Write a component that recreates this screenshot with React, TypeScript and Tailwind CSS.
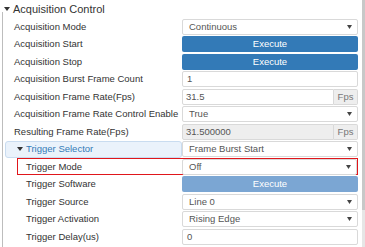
import React from "react";

type Row =
  | { label: string; kind: "select"; value: string; indent?: boolean; focus?: boolean }
  | { label: string; kind: "button"; disabled?: boolean; indent?: boolean }
  | { label: string; kind: "input"; value: string; indent?: boolean }
  | { label: string; kind: "unit"; value: string; readOnly?: boolean; indent?: boolean };

const acquisition: Row[] = [
  { label: "Acquisition Mode", kind: "select", value: "Continuous" },
  { label: "Acquisition Start", kind: "button" },
  { label: "Acquisition Stop", kind: "button" },
  { label: "Acquisition Burst Frame Count", kind: "input", value: "1" },
  { label: "Acquisition Frame Rate(Fps)", kind: "unit", value: "31.5" },
  { label: "Acquisition Frame Rate Control Enable", kind: "select", value: "True" },
  { label: "Resulting Frame Rate(Fps)", kind: "unit", value: "31.500000", readOnly: true },
];

const trigger: Row[] = [
  { label: "Trigger Mode", kind: "select", value: "Off", indent: true, focus: true },
  { label: "Trigger Software", kind: "button", disabled: true, indent: true },
  { label: "Trigger Source", kind: "select", value: "Line 0", indent: true },
  { label: "Trigger Activation", kind: "select", value: "Rising Edge", indent: true },
  { label: "Trigger Delay(us)", kind: "input", value: "0", indent: true },
];

function Caret({ className = "" }: { className?: string }) {
  return (
    <svg width="6" height="4" viewBox="0 0 6 4" className={className}>
      <path d="M0 0h6L3 4z" fill="currentColor" />
    </svg>
  );
}

function Control({ row }: { row: Row }) {
  if (row.kind === "button") {
    return (
      <div
        className={
          "h-[16px] rounded-[2px] flex items-center justify-center text-white text-[9.5px] " +
          (row.disabled ? "bg-[#7ba6d3]" : "bg-[#337ab7]")
        }
      >
        Execute
      </div>
    );
  }
  if (row.kind === "select") {
    return (
      <div className="h-[16px] bg-white border border-[#d9d9d9] rounded-[2px] flex items-center justify-between pl-[6px] pr-[5px] text-[9.5px] text-[#555]">
        <span>{row.value}</span>
        <svg width="5" height="4" viewBox="0 0 5 4" className="text-[#444]">
          <path d="M0 0h5L2.5 4z" fill="currentColor" />
        </svg>
      </div>
    );
  }
  if (row.kind === "input") {
    return (
      <div className="h-[16px] bg-white border border-[#d9d9d9] rounded-[2px] flex items-center pl-[4px] text-[9.5px] text-[#555]">
        {row.value}
      </div>
    );
  }
  return (
    <div className="h-[16px] flex text-[9.5px] text-[#555]">
      <div
        className={
          "flex-1 border border-[#d9d9d9] rounded-l-[2px] flex items-center pl-[3px] " +
          (row.readOnly ? "bg-[#eeeeee]" : "bg-white")
        }
      >
        {row.value}
      </div>
      <div className="w-[24px] bg-[#eeeeee] border border-l-0 border-[#d9d9d9] rounded-r-[2px] flex items-center justify-center text-[#777]">
        Fps
      </div>
    </div>
  );
}

function ParamRow({ row }: { row: Row }) {
  const focus = row.kind === "select" && row.focus;
  return (
    <div className="h-[17.5px] flex items-center">
      <div
        className={
          "flex items-center h-[17px] " +
          (focus ? "ml-[17px] w-[341px] border border-[#e0161b] " : "w-[358px]")
        }
      >
        <div
          className={
            "shrink-0 text-[9.5px] text-[#333] whitespace-nowrap " +
            (focus ? "w-[164px] pl-[8px]" : row.indent ? "w-[182px] pl-[26px]" : "w-[182px] pl-[14px]")
          }
        >
          {row.label}
        </div>
        <div className="flex-1">
          <Control row={row} />
        </div>
      </div>
    </div>
  );
}

export default function App() {
  return (
    <div className="w-[365px] h-[247px] bg-white overflow-hidden relative font-['Liberation_Sans',Arial,sans-serif]">
      <div className="absolute left-[2px] top-[12px] bottom-0 w-px bg-[#bdbdbd]" />
      <div className="absolute right-0 top-0 w-[3px] h-[210px] bg-[#c8c8c8]" />
      <div className="absolute right-0 top-[210px] bottom-0 w-[3px] bg-[#e6e6e6]" />

      <div className="h-[18px] flex items-center pl-[4px] text-[11px] text-[#333]">
        <Caret className="text-[#333] mr-[3px]" />
        <span>Acquisition Control</span>
      </div>

      {acquisition.map((r) => (
        <ParamRow key={r.label} row={r} />
      ))}

      <div className="h-[17.5px] flex items-center">
        <div className="w-[177px] h-[17px] ml-[5px] flex items-center bg-[#eaf2fb] border border-[#c9dcf0] rounded-[3px] text-[9.5px] text-[#337ab7]">
          <Caret className="text-[#333] ml-[11px] mr-[3px]" />
          <span>Trigger Selector</span>
        </div>
        <div className="w-[176px]">
          <Control row={{ label: "Trigger Selector", kind: "select", value: "Frame Burst Start" }} />
        </div>
      </div>

      {trigger.map((r) => (
        <ParamRow key={r.label} row={r} />
      ))}
    </div>
  );
}
